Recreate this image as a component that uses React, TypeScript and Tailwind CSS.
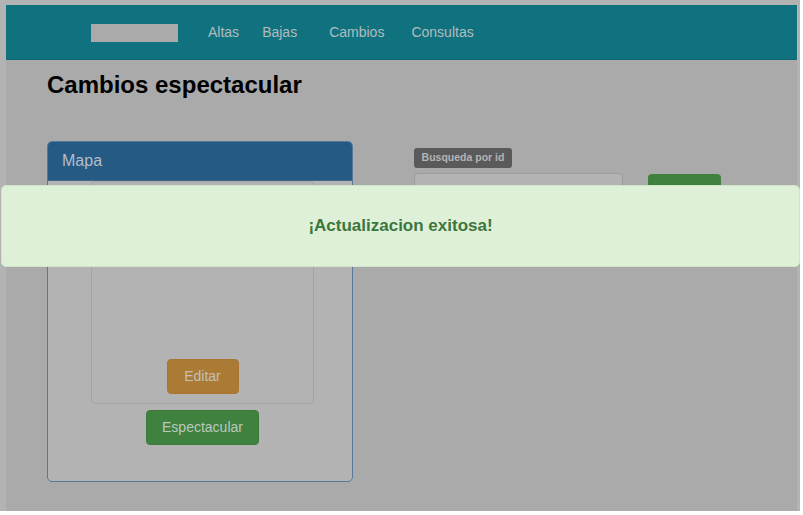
import React from "react";

export default function App() {
  return (
    <div className="relative w-[803px] h-[515px] bg-white overflow-hidden" style={{ fontFamily: '"Liberation Sans", Arial, sans-serif' }}>
      <div className="w-[800px] h-[511px] bg-[#b3b3b3] pt-[5px] pl-[6px] pr-[3px]">
        <div className="h-full bg-[#aaaaaa] flex flex-col">
          <nav className="h-[55px] bg-[#11727f] border-b border-[#0f6570] flex items-center pl-[85px] pt-[1px]">
            <div className="w-[87px] h-[18px] bg-[#aaaaaa]" />
            <div className="flex items-center text-[14px] text-[#b0bcbe] ml-[30px]">
              <span>Altas</span>
              <span className="ml-[23px]">Bajas</span>
              <span className="ml-[32px]">Cambios</span>
              <span className="ml-[27px]">Consultas</span>
            </div>
          </nav>
          <div className="pl-[41px]">
            <h1 className="text-[24px] font-bold text-black mt-[10px] leading-[30px]">Cambios espectacular</h1>
            <div className="flex mt-[41px]">
              <div className="w-[306px] h-[341px] rounded-[5px] border border-[#56799a] bg-[#b3b3b3] flex flex-col overflow-hidden">
                <div className="h-[39px] bg-[#245a84] flex items-center pl-[14px] text-[16px] text-[#b4bec8] border-b border-[#3d6a8f]">Mapa</div>
                <div className="flex flex-col items-center pl-[5px]">
                  <div className="w-[223px] h-[223px] border border-[#a4a4a4] rounded-[4px] flex flex-col items-center justify-end pb-[9px]">
                    <div className="w-[72px] h-[35px] rounded-[4px] bg-[#ab7a35] border border-[#a87533] flex items-center justify-center text-[14px] text-[#c4c0b8]">Editar</div>
                  </div>
                  <div className="mt-[6px] w-[113px] h-[35px] rounded-[4px] bg-[#3f8240] border border-[#3a7a3b] flex items-center justify-center text-[14px] text-[#bcc8bc]">Espectacular</div>
                </div>
              </div>
              <div className="ml-[61px] mt-[7px]">
                <div className="w-[98px] h-[20px] rounded-[3px] bg-[#5a5a5a] flex items-center justify-center text-[10.5px] font-bold text-[#b4b4b4]">Busqueda por id</div>
                <div className="flex mt-[5px]">
                  <div className="w-[209px] h-[34px] rounded-[4px] border border-[#9c9c9c] bg-[#b3b3b3]" />
                  <div className="ml-[25px] mt-[1px] w-[73px] h-[34px] rounded-[4px] bg-[#3f8240]" />
                </div>
              </div>
            </div>
          </div>
        </div>
      </div>
      <div className="absolute left-[1px] top-[185px] w-[799px] h-[82px] rounded-[5px] bg-[#dff0d8] border border-[#d0e5c6] flex items-center justify-center">
        <span className="text-[17px] font-bold text-[#3c763d]">¡Actualizacion exitosa!</span>
      </div>
    </div>
  );
}
